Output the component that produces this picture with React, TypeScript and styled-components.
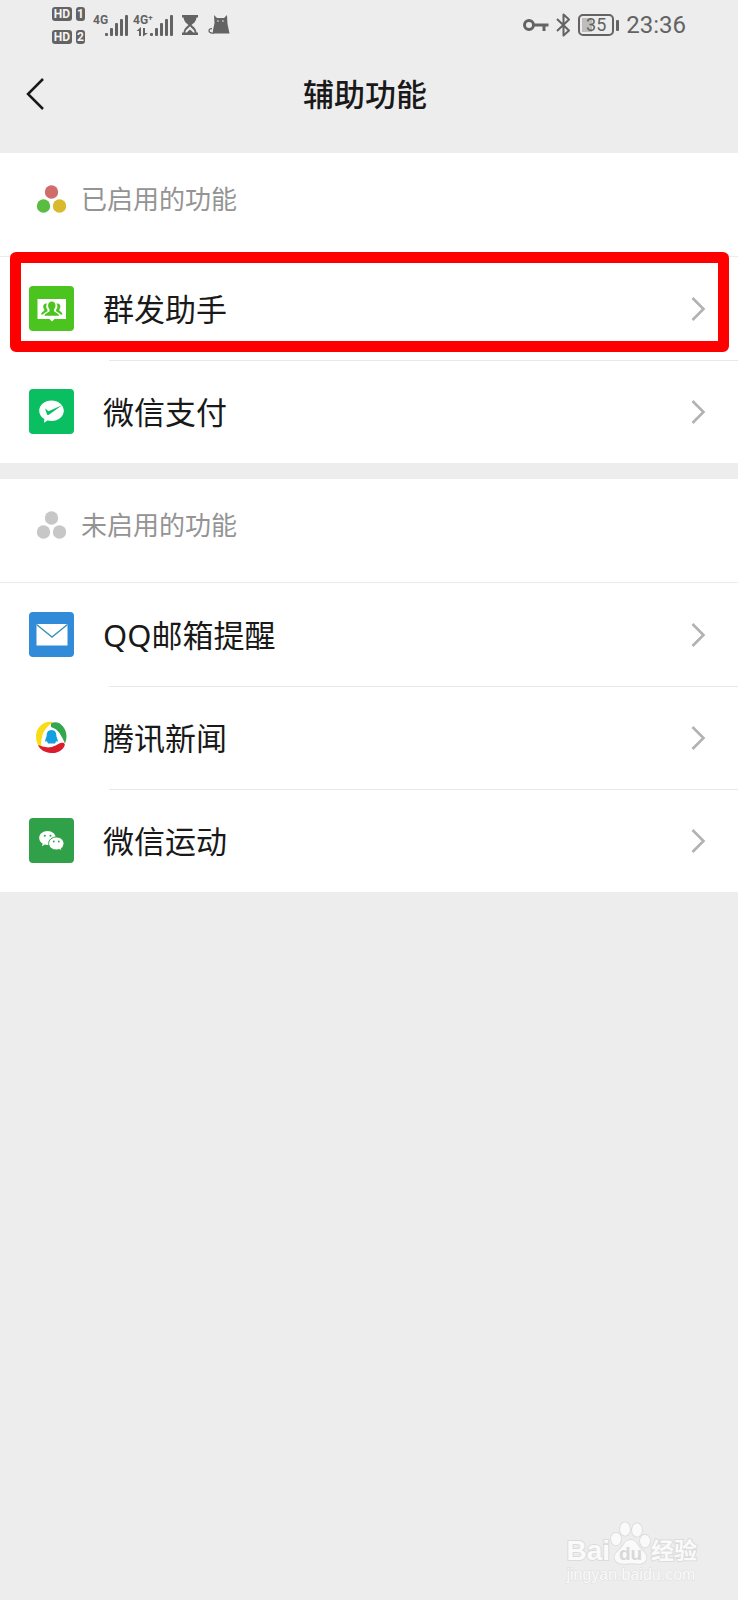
import React from 'react';
import styled, { createGlobalStyle } from 'styled-components';

const GlobalStyle = createGlobalStyle`
  * { box-sizing: border-box; }
  body {
    margin: 0;
    background: #ededed;
    color: #191919;
    font-family: "Noto Sans", "Noto Sans CJK SC", sans-serif;
  }
  button {
    margin: 0;
    border: 0;
    background: none;
    color: inherit;
    font: inherit;
    cursor: pointer;
  }
  svg { display: block; flex: none; }
`;

const Page = styled.div`
  display: flex;
  flex-direction: column;
  min-height: 100vh;
`;

/* ---------- status bar ---------- */

const StatusBar = styled.div`
  display: flex;
  justify-content: space-between;
  height: 50px;
  padding: 0 52px;
  color: #636363;
  font-family: Roboto, sans-serif;
`;

const StatusGroup = styled.div<{ $gap: number }>`
  display: flex;
  align-items: center;
  gap: ${(p) => p.$gap}px;
`;

const SimColumn = styled.div`
  display: flex;
  flex-direction: column;
  gap: 9px;
`;

const SimLine = styled.div`
  display: flex;
  gap: 4px;
`;

const Tag = styled.span<{ $width: number }>`
  width: ${(p) => p.$width}px;
  height: 14px;
  border-radius: 3px;
  background: #636363;
  color: #f4f4f4;
  font-size: 12px;
  font-weight: 700;
  line-height: 14px;
  text-align: center;
`;

const Battery = styled.div`
  display: flex;
  align-items: center;
  gap: 2px;
  &::after {
    content: "";
    width: 3px;
    height: 11px;
    border-radius: 1px;
    background: #636363;
  }
`;

const BatteryBody = styled.span`
  width: 36px;
  height: 22px;
  border: 2px solid #636363;
  border-radius: 5px;
  background: linear-gradient(90deg, #bdbdbd 10px, transparent 10px) 2px 2px / 28px 14px no-repeat;
  font-size: 18px;
  line-height: 18px;
  text-align: center;
`;

const Clock = styled.time`
  font-size: 24px;
  line-height: 28px;
`;

const Signal = ({ label, arrows }: { label: string; arrows?: boolean }) => {
  const start = arrows ? 17 : 12;
  const width = arrows ? 41 : 32;
  return (
    <svg width={width} height="24" viewBox={`0 0 ${width} 24`} fill="#636363" overflow="visible">
      <text x="0" y="11" fontSize="12" fontWeight="700" fontFamily="Roboto, sans-serif">
        {label}
      </text>
      {arrows && (
        <path d="M6 23v-5H3.500L8 14v9zM10 15h2v5h3l-5 3.500z" />
      )}
      {[3, 8, 13, 17, 21].map((h, i) => (
        <rect key={h} x={start + i * 5} y={23 - h} width="3" height={h} rx="1" />
      ))}
    </svg>
  );
};

const Hourglass = () => (
  <svg width="18" height="22" viewBox="0 0 18 22" fill="#636363">
    <path d="M0 1h16v2.500h-1.500C14 8 11 9.500 9.500 11c1.500 1.500 4.500 3 5 7.500H16V21H0v-2.500h1.500C2 14 5 12.500 6.500 11 5 9.500 2 8 1.500 3.500H0z" />
    <path d="M8 12c-.5 2-4.500 3-4.700 6.500h1.400L8 15.500l3.300 3h1.400C12.500 15 8.500 14 8 12z" fill="#ededed" />
  </svg>
);

const Cat = () => (
  <svg width="22" height="22" viewBox="0 0 22 22">
    <path d="M6 1l3 3h7l3-3 .5 9 2 9.500H5C4.500 17 6 12 6.500 9z" fill="#636363" />
    <path d="M6 18.800c-3 .7-5-.3-5-2 0-1.700 1.500-2.300 3-2" fill="none" stroke="#636363" strokeWidth="1.300" />
    <path d="M9 7h1.800M14 7h1.800" stroke="#ededed" strokeWidth="1.200" />
  </svg>
);

const Key = () => (
  <svg width="27" height="14" viewBox="0 0 27 14" fill="none" stroke="#636363" strokeWidth="3">
    <circle cx="7" cy="7" r="4.500" />
    <path d="M12 7h14.500" />
    <path d="M22 7v6" />
  </svg>
);

const Bluetooth = () => (
  <svg width="15" height="24" viewBox="0 0 15 24" fill="none" stroke="#636363" strokeWidth="2" strokeLinejoin="round">
    <path d="M1 6l12 11.500-5.500 5V1.500L13 6.500 1 18" />
  </svg>
);

/* ---------- navigation ---------- */

const NavBar = styled.header`
  display: grid;
  grid-template-columns: 64px 1fr 72px;
  align-items: center;
  height: 103px;
  padding-bottom: 16px;
`;

const BackButton = styled.button`
  display: flex;
  align-items: center;
  height: 72px;
  padding: 0 0 0 26px;
`;

const Title = styled.h1`
  margin: 0;
  font-size: 31px;
  font-weight: 500;
  line-height: 40px;
  text-align: center;
`;

/* ---------- lists ---------- */

const Sections = styled.main`
  display: flex;
  flex-direction: column;
  gap: 16px;
`;

const Section = styled.section`
  background: #fff;
`;

const SectionHead = styled.div`
  display: flex;
  align-items: center;
  gap: 15px;
  height: 104px;
  padding: 0 36px 11px;
  border-bottom: 1px solid #ececec;
`;

const SectionTitle = styled.h2`
  margin: 0;
  color: #949494;
  font-size: 26px;
  font-weight: 400;
  line-height: 36px;
`;

const List = styled.ul`
  margin: 0;
  padding: 0;
  list-style: none;
`;

const Item = styled.li`
  position: relative;
  & + &::before {
    content: "";
    display: block;
    height: 1px;
    margin: 0 0 -1px 109px;
    background: #e8e8e8;
  }
`;

const RowButton = styled.button`
  display: flex;
  align-items: center;
  gap: 29px;
  width: 100%;
  height: 103px;
  padding: 0 32px 0 29px;
  text-align: left;
`;

const RowLabel = styled.span`
  flex: 1;
  font-size: 31px;
  line-height: 40px;
`;

const Highlight = styled.div`
  position: absolute;
  inset: -5px 9px 8px 10px;
  border: 11px solid #fe0000;
  border-radius: 6px;
  pointer-events: none;
`;

const Chevron = () => (
  <svg width="16" height="26" viewBox="0 0 16 26" fill="none" stroke="#b2b2b2" strokeWidth="2.600">
    <path d="M2.500 2l11 11-11 11" />
  </svg>
);

const Dots = ({ colors }: { colors: string[] }) => (
  <svg width="30" height="28" viewBox="0 0 30 28">
    <circle cx="15.500" cy="7" r="6.700" fill={colors[0]} />
    <circle cx="7.500" cy="21" r="6.700" fill={colors[1]} />
    <circle cx="23.500" cy="21" r="6.700" fill={colors[2]} />
  </svg>
);

const Tile = ({ fill, children }: { fill: string; children: React.ReactNode }) => (
  <svg width="45" height="45" viewBox="0 0 45 45">
    <rect width="45" height="45" rx="4" fill={fill} />
    {children}
  </svg>
);

const BroadcastIcon = () => (
  <Tile fill="#4cc41f">
    <path d="M8.500 13h28.500v20H25.500L23 35.500 20.500 33H8.500z" fill="#fff" />
    <g fill="#4cc41f">
      <path d="M22.800 15.500c2.500 0 3.700 1.700 3.700 4 0 1.700-.7 2.800-1.400 3.700v2c.8 1.300 4.500 1.600 5 4.600H15.500c.5-3 4.200-3.300 5-4.600v-2c-.7-.9-1.400-2-1.400-3.700 0-2.300 1.200-4 3.700-4z" />
      <path d="M18.200 17.500c-2.700-.5-4 1-4 3 0 1.300.5 2 1 2.700v1.200c-.7 1.200-2.900 1.600-3.200 4.200h2.200c.6-1.800 2.800-2.200 4.300-3.400v-1.400c-.8-.9-1.300-2-1.300-3.500 0-1.100.3-2.100 1-2.800z" />
      <path d="M27.400 17.500c2.700-.5 4 1 4 3 0 1.300-.5 2-1 2.700v1.200c.7 1.200 2.900 1.600 3.200 4.200h-2.200c-.6-1.800-2.800-2.200-4.300-3.400v-1.400c.8-.9 1.300-2 1.300-3.500 0-1.100-.3-2.100-1-2.800z" />
    </g>
  </Tile>
);

const PayIcon = () => (
  <Tile fill="#0abf62">
    <path d="M22.500 11.500c6.900 0 12.300 4.600 12.300 10.300S29.400 32 22.500 32c-1.400 0-2.700-.2-4-.5L15 33.700l.3-3.600c-3.100-1.900-5.100-4.900-5.100-8.300 0-5.700 5.400-10.300 12.300-10.300z" fill="#fff" />
    <path d="M16 19.500l3.600 2.800L33.500 16l-13.700 9.800c-.7.500-1.500.3-1.800-.4z" fill="#0abf62" />
  </Tile>
);

const MailIcon = () => (
  <Tile fill="#318bd8">
    <path d="M7.500 12h31v21.500h-31z" fill="#fff" />
    <path d="M7.500 12.500L23 25l15.500-12.500" fill="none" stroke="#3f94b8" strokeWidth="1.500" />
  </Tile>
);

const NewsIcon = () => (
  <svg width="45" height="45" viewBox="0 0 45 45">
    <path d="M24 7C13 5.500 6.500 14 7 22.500c.2 5 2.400 8.700 5 11 .5-3.500-.3-7 1-12C14.500 15.500 19 10.500 24 7z" fill="#f9db16" />
    <path d="M22 8.500c4-2.500 9-1 12 3 4 5 4.500 11 2 17-1-2.500-2-4.500-3.500-7-2.500-5-5.500-8-10.500-9.500z" fill="#35a650" />
    <path d="M9 30c3 .8 7 2.800 12 2.300 5.500-.5 8-4.300 12-4.500 3 .1 3.500 1.700 2 4.200C32.500 36 27.500 38.500 22 38c-6-.5-11-3-13-8z" fill="#db1c2b" />
    <path d="M22.500 15c3.700 0 4.800 2.800 4.800 5.500 0 1.500 1.700 3.500 1.500 6-.7.700-1.200-.3-1.600-.5l-1.200 2.500h-7l-1.200-2.500c-.4.200-.9 1.200-1.600.5-.2-2.500 1.500-4.500 1.500-6 0-2.700 1.100-5.500 4.800-5.500z" fill="#169fe0" />
  </svg>
);

const SportIcon = () => (
  <Tile fill="#30a148">
    <path d="M18.500 13c4.600 0 8.300 3.100 8.300 7s-3.700 7-8.300 7c-1 0-1.900-.1-2.700-.4L13 28.200l.6-2.600c-2.100-1.300-3.400-3.300-3.400-5.600 0-3.900 3.700-7 8.300-7z" fill="#fff" />
    <path d="M27.300 19c4.200 0 7.700 2.900 7.700 6.500 0 2-1 3.700-2.700 4.900l.5 2.300-2.600-1.200c-.9.300-1.900.5-2.900.5-4.300 0-7.700-2.900-7.700-6.500s3.400-6.500 7.700-6.500z" fill="#fff" stroke="#30a148" strokeWidth="1" />
    <g fill="#30a148">
      <circle cx="15.800" cy="17.800" r="1" />
      <circle cx="21.500" cy="17.800" r="1" />
      <circle cx="24.800" cy="23.500" r=".9" />
      <circle cx="29.800" cy="23.500" r=".9" />
    </g>
  </Tile>
);

/* ---------- watermark ---------- */

const Watermark = styled.footer`
  display: flex;
  flex-direction: column;
  align-self: flex-end;
  margin-top: auto;
  padding: 0 41px 15px 0;
  color: #fafafa;
  font-family: "Liberation Sans", "Noto Sans CJK SC", sans-serif;
  -webkit-text-stroke: 2px #dcdcdc;
  paint-order: stroke fill;
`;

const Brand = styled.div`
  display: flex;
  align-items: flex-end;
  height: 44px;
  font-size: 28px;
  font-weight: 700;
  line-height: 28px;
`;

const BrandSuffix = styled.span`
  font-size: 23px;
`;

const Site = styled.span`
  font-size: 16px;
  line-height: 20px;
  -webkit-text-stroke: 1px #dedede;
`;

const PawText = styled.text`
  fill: #d8d8d8;
  font-size: 19px;
  stroke: none;
  -webkit-text-stroke: 0;
`;

const Paw = () => (
  <svg width="41" height="44" viewBox="0 0 41 44" fill="#fafafa" stroke="#d8d8d8" strokeWidth="1.500">
    <ellipse cx="6" cy="18" rx="5" ry="6.300" />
    <ellipse cx="15" cy="8" rx="5" ry="6.800" />
    <ellipse cx="27" cy="9" rx="5" ry="6.800" />
    <ellipse cx="35" cy="20" rx="5" ry="6.300" />
    <path d="M20.500 19c5 0 7 4.500 9.500 8 3.500 3.500 7 6 6.500 10-.8 4.500-4.500 6-9.500 5.700-4-.4-8-.4-12 0-5 .3-9.500-1-10.500-5.700-.6-4 3.500-6.500 6.500-10 3-3.500 4.500-8 9.500-8z" />
    <PawText x="20.500" y="39" textAnchor="middle">du</PawText>
  </svg>
);

/* ---------- data ---------- */

type Feature = { label: string; icon: React.ReactNode; highlighted?: boolean };

const groups: { title: string; colors: string[]; features: Feature[] }[] = [
  {
    title: '已启用的功能',
    colors: ['#d06c6c', '#5bbc42', '#d9b92d'],
    features: [
      { label: '群发助手', icon: <BroadcastIcon />, highlighted: true },
      { label: '微信支付', icon: <PayIcon /> },
    ],
  },
  {
    title: '未启用的功能',
    colors: ['#c7c7c7', '#c7c7c7', '#c7c7c7'],
    features: [
      { label: 'QQ邮箱提醒', icon: <MailIcon /> },
      { label: '腾讯新闻', icon: <NewsIcon /> },
      { label: '微信运动', icon: <SportIcon /> },
    ],
  },
];

export default function App() {
  return (
    <Page>
      <GlobalStyle />
      <StatusBar>
        <StatusGroup $gap={8}>
          <SimColumn>
            {['1', '2'].map((n) => (
              <SimLine key={n}>
                <Tag $width={20}>HD</Tag>
                <Tag $width={9}>{n}</Tag>
              </SimLine>
            ))}
          </SimColumn>
          <Signal label="4G" />
          <Signal label="4G⁺" arrows />
          <Hourglass />
          <Cat />
        </StatusGroup>
        <StatusGroup $gap={7}>
          <Key />
          <Bluetooth />
          <Battery>
            <BatteryBody>35</BatteryBody>
          </Battery>
          <Clock>23:36</Clock>
        </StatusGroup>
      </StatusBar>

      <NavBar>
        <BackButton aria-label="返回">
          <svg width="19" height="34" viewBox="0 0 19 34" fill="none" stroke="#191919" strokeWidth="2.500">
            <path d="M17 2L2 17l15 15" />
          </svg>
        </BackButton>
        <Title>辅助功能</Title>
      </NavBar>

      <Sections>
        {groups.map((group) => (
          <Section key={group.title}>
            <SectionHead>
              <Dots colors={group.colors} />
              <SectionTitle>{group.title}</SectionTitle>
            </SectionHead>
            <List>
              {group.features.map((feature) => (
                <Item key={feature.label}>
                  <RowButton>
                    {feature.icon}
                    <RowLabel>{feature.label}</RowLabel>
                    <Chevron />
                  </RowButton>
                  {feature.highlighted && <Highlight />}
                </Item>
              ))}
            </List>
          </Section>
        ))}
      </Sections>

      <Watermark>
        <Brand>
          <span>Bai</span>
          <Paw />
          <BrandSuffix>经验</BrandSuffix>
        </Brand>
        <Site>jingyan.baidu.com</Site>
      </Watermark>
    </Page>
  );
}
